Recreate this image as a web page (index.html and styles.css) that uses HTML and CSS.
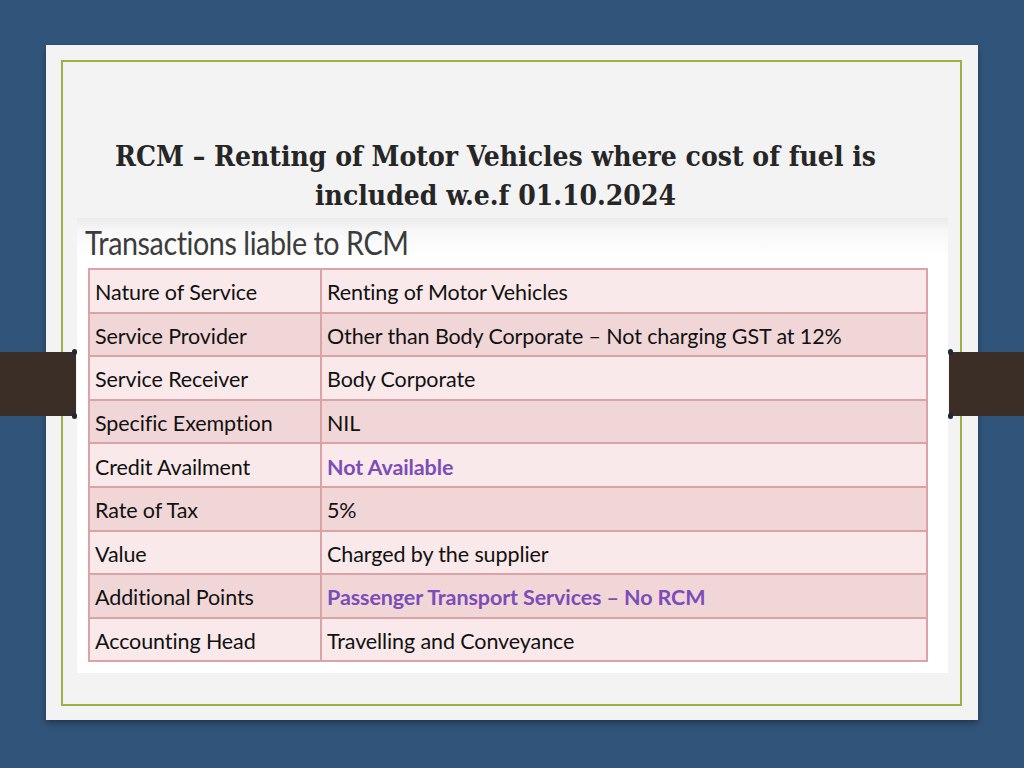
FILE: index.html
```html
<!DOCTYPE html>
<html>
<head>
<meta charset="utf-8">
<link rel="stylesheet" href="styles.css">
</head>
<body>
<div class="stage">
  <div class="card">
    <div class="frame">
      <h1 class="title">RCM – Renting of Motor Vehicles where cost of fuel is<br>included w.e.f 01.10.2024</h1>
      <div class="panel">
        <h2 class="heading"><span class="heading-text">Transactions liable to RCM</span></h2>
        <table class="grid">
          <tr class="light"><td class="k">Nature of Service</td><td>Renting of Motor Vehicles</td></tr>
          <tr class="dark"><td class="k">Service Provider</td><td>Other than Body Corporate – Not charging GST at 12%</td></tr>
          <tr class="light"><td class="k">Service Receiver</td><td>Body Corporate</td></tr>
          <tr class="dark"><td class="k">Specific Exemption</td><td>NIL</td></tr>
          <tr class="light"><td class="k">Credit Availment</td><td class="hl">Not Available</td></tr>
          <tr class="dark"><td class="k">Rate of Tax</td><td>5%</td></tr>
          <tr class="light"><td class="k">Value</td><td>Charged by the supplier</td></tr>
          <tr class="dark"><td class="k">Additional Points</td><td class="hl">Passenger Transport Services – No RCM</td></tr>
          <tr class="light"><td class="k">Accounting Head</td><td>Travelling and Conveyance</td></tr>
        </table>
      </div>
    </div>
  </div>
  <div class="clip clip-left"><span class="dot top"></span><span class="dot bottom"></span></div>
  <div class="clip clip-right"><span class="dot top"></span><span class="dot bottom"></span></div>
</div>
</body>
</html>
```

FILE: styles.css
```css
html, body {
  margin: 0;
  padding: 0;
}
body {
  background: #31547a;
  width: 1024px;
  height: 768px;
  overflow: hidden;
}
.stage {
  position: relative;
  width: 1024px;
  height: 768px;
  padding: 45px 0 0 46px;
  box-sizing: border-box;
}
.card {
  width: 932px;
  height: 675px;
  background: #f3f3f3;
  box-sizing: border-box;
  padding: 15px 16px 14px 15px;
  box-shadow: 0 3px 6px rgba(0,0,0,0.35);
}
.frame {
  height: 100%;
  box-sizing: border-box;
  border: 2px solid #9bb045;
  padding: 0 12px 0 14px;
  display: flex;
  flex-direction: column;
}
.title {
  margin: 0;
  padding: 75px 54px 0 20px;
  height: 156px;
  flex: none;
  box-sizing: border-box;
  font-family: "DejaVu Serif Condensed", "DejaVu Serif", serif;
  font-stretch: condensed;
  font-weight: bold;
  font-size: 28px;
  line-height: 39px;
  color: #262626;
  text-align: center;
  white-space: nowrap;
}
.panel {
  height: 455px;
  flex: none;
  background: linear-gradient(#ebebeb 0px, #f8f8f8 14px, #ffffff 40px, #ffffff 100%);
  padding: 0 20px 0 11px;
  box-sizing: border-box;
}
.heading {
  margin: 0 0 0 -3px;
  height: 50px;
  font-family: "Lato", "Liberation Sans", sans-serif;
  font-weight: normal;
  font-size: 33px;
  line-height: 48px;
  letter-spacing: -0.5px;
  color: #3c3c3c;
}
.heading-text {
  display: inline-block;
  transform: scaleX(0.87);
  transform-origin: left center;
}
.grid {
  width: 840px;
  border-collapse: collapse;
  font-family: "Lato", "Liberation Sans", sans-serif;
  font-size: 21.5px;
  letter-spacing: -0.1px;
  color: #111;
}
.grid td {
  height: 43.6px;
  padding: 3px 5px 0 5px;
  box-sizing: border-box;
  border: 2px solid #dba3a6;
  vertical-align: middle;
  white-space: nowrap;
}
.grid td.k {
  width: 232px;
}
.grid tr.light td {
  background: #f9e9ea;
}
.grid tr.dark td {
  background: #f1d6d7;
}
.grid td.hl {
  color: #7b4db8;
  font-weight: bold;
}
.clip {
  position: absolute;
  top: 352px;
  height: 64px;
  background: #3b2e27;
}
.clip-left {
  left: 0;
  width: 76px;
}
.clip-right {
  left: 949px;
  width: 75px;
}
.dot {
  position: absolute;
  width: 5px;
  height: 6px;
  border-radius: 3px;
  background: #1f2a38;
}
.clip-left .dot {
  right: -1px;
}
.clip-right .dot {
  left: -1px;
}
.dot.top { top: -3px; }
.dot.bottom { bottom: -3px; }
```
